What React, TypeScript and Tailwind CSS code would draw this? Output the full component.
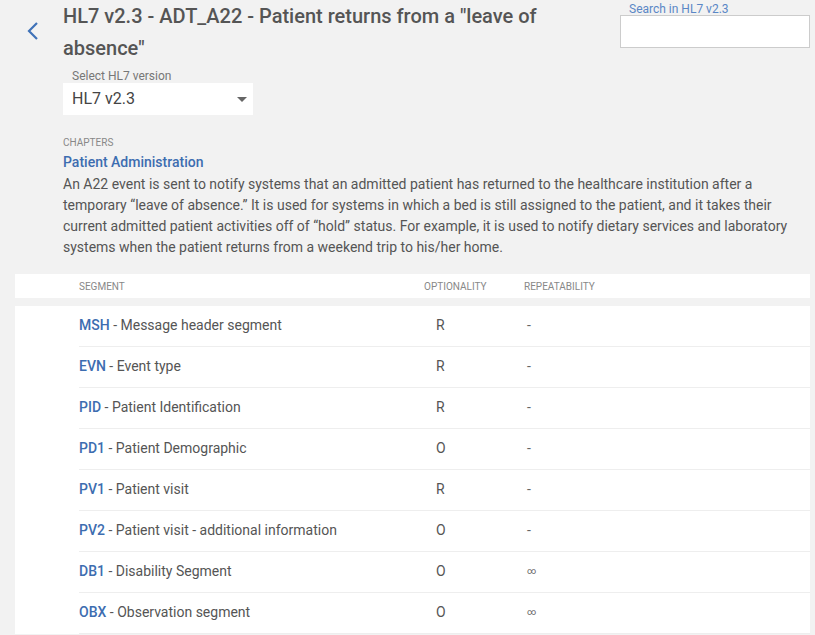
const segments = [
  { code: "MSH", name: "Message header segment", opt: "R", rep: "-" },
  { code: "EVN", name: "Event type", opt: "R", rep: "-" },
  { code: "PID", name: "Patient Identification", opt: "R", rep: "-" },
  { code: "PD1", name: "Patient Demographic", opt: "O", rep: "-" },
  { code: "PV1", name: "Patient visit", opt: "R", rep: "-" },
  { code: "PV2", name: "Patient visit - additional information", opt: "O", rep: "-" },
  { code: "DB1", name: "Disability Segment", opt: "O", rep: "∞" },
  { code: "OBX", name: "Observation segment", opt: "O", rep: "∞" },
];

export default function App() {
  return (
    <div
      className="min-h-[635px] bg-[#f2f2f2] text-[#555]"
      style={{ fontFamily: "Roboto, 'Noto Sans', sans-serif" }}
    >
      {/* Header: back, title, version select, search */}
      <div className="flex justify-between pr-[5px]">
        <div className="flex">
          <button className="ml-[25px] mt-[21px] h-[20px] w-[16px] text-[#3f72b8]">
            <svg viewBox="0 0 16 20" className="h-[20px] w-[16px]">
              <polyline
                points="12,2 4,10 12,18"
                fill="none"
                stroke="currentColor"
                strokeWidth="2.2"
              />
            </svg>
          </button>
          <div className="ml-[22px]">
            <h1 className="w-[520px] text-[20px] font-medium leading-[32px] text-[#555]">
              HL7 v2.3 - ADT_A22 - Patient returns from a "leave of absence"
            </h1>
            <label className="mt-[5px] block pl-[9px] text-[12px] leading-[14px] text-[#777]">
              Select HL7 version
            </label>
            <div className="flex h-[32px] w-[190px] items-center justify-between bg-white pl-[9px] pr-[4px]">
              <span className="text-[16px] text-[#444]">HL7 v2.3</span>
              <svg viewBox="0 0 10 5" className="mr-[2px] h-[5px] w-[10px]">
                <polygon points="0,0 10,0 5,5" fill="#666" />
              </svg>
            </div>
          </div>
        </div>
        <div className="w-[190px]">
          <div className="pl-[9px] pt-[3px] text-[12px] leading-[12px] text-[#5a87c6]">
            Search in HL7 v2.3
          </div>
          <input className="block h-[33px] w-[190px] border border-[#ccc] bg-white outline-none" />
        </div>
      </div>

      {/* Chapter description */}
      <div className="ml-[63px] mt-[22px] pr-[20px]">
        <div className="text-[10px] uppercase leading-[12px] text-[#888]">Chapters</div>
        <div className="mt-[5px] text-[14px] font-medium leading-[17px] text-[#3d6db0]">
          Patient Administration
        </div>
        <p className="mt-[3px] text-[14px] leading-[21px] text-[#555]">
          An A22 event is sent to notify systems that an admitted patient has returned to the healthcare
          institution after a temporary “leave of absence.” It is used for systems in which a bed is
          still assigned to the patient, and it takes their current admitted patient activities off of
          “hold” status. For example, it is used to notify dietary services and laboratory systems when
          the patient returns from a weekend trip to his/her home.
        </p>
      </div>

      {/* Segment table */}
      <div className="ml-[15px] mr-[5px] mt-[16px]">
        <div className="grid h-[24px] grid-cols-[409px_100px_1fr] items-center bg-white pt-[1px] text-[10px] uppercase text-[#888]">
          <span className="pl-[64px]">Segment</span>
          <span>Optionality</span>
          <span>Repeatability</span>
        </div>
        <div className="mt-[8px] bg-white pl-[64px]">
          {segments.map((s) => (
            <div
              key={s.code}
              className="grid h-[41px] grid-cols-[345px_100px_1fr] items-center border-b border-[#eee] pb-[1px] text-[14px]"
            >
              <span>
                <span className="font-medium text-[#3d6db0]">{s.code}</span>
                <span className="text-[#555]"> - {s.name}</span>
              </span>
              <span className="pl-[12px] text-[#555]">{s.opt}</span>
              <span className={s.rep === "∞" ? "pl-[3px] text-[9px] text-[#666]" : "pl-[3px] text-[#666]"}>
                {s.rep}
              </span>
            </div>
          ))}
        </div>
      </div>
    </div>
  );
}
